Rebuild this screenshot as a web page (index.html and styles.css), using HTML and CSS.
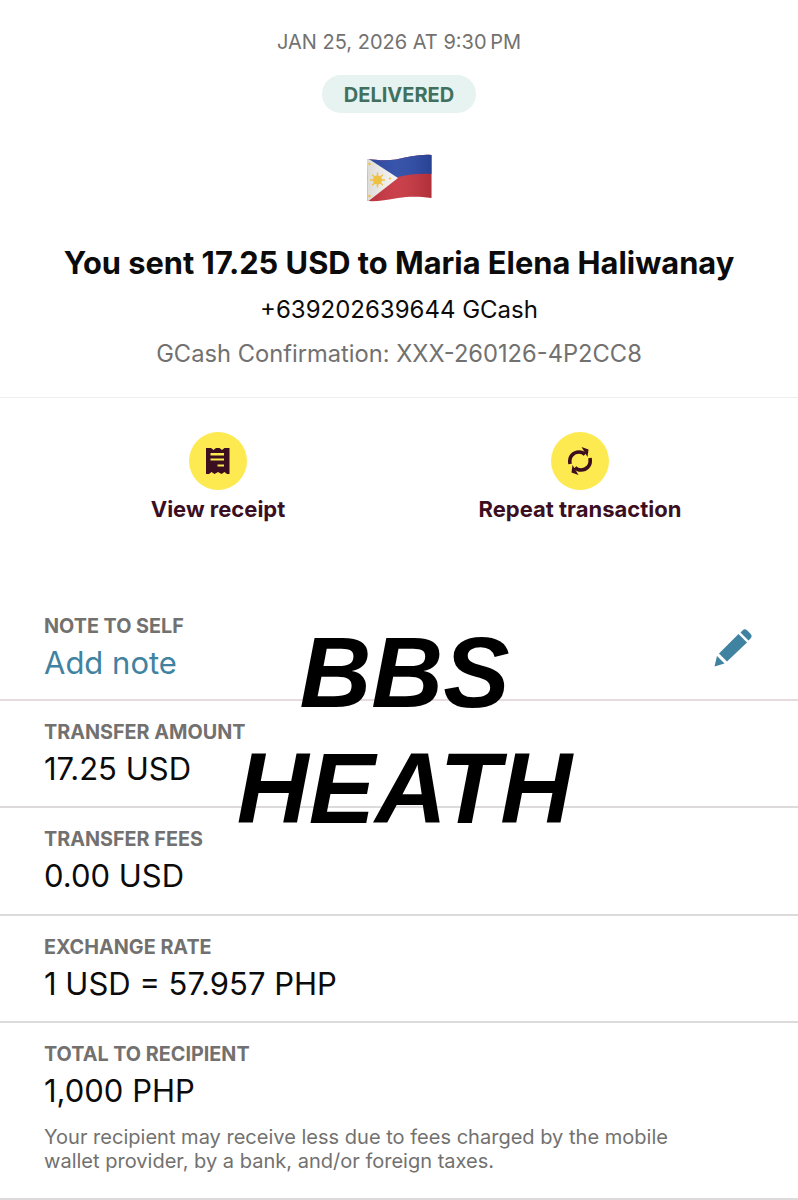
FILE: index.html
```html
<!DOCTYPE html>
<html lang="en">
<head>
    <meta charset="UTF-8">
    <meta name="viewport" content="width=device-width, initial-scale=1.0">
    <title>Transfer details</title>
    <link rel="stylesheet" href="styles.css">
</head>
<body>
    <div class="page">
        <section class="summary">
            <div class="date">JAN 25, 2026 AT 9:30&#8239;PM</div>
            <div class="status">DELIVERED</div>
            <svg class="flag" width="66" height="48" viewBox="0 0 66 48">
                <defs>
                    <clipPath id="flag-shape">
                        <path d="M1 5C10 6 20 7 30 5.500C42 3 54 0 65.500 1L65.500 44C54 42.500 44 42 32 44C20 46.500 10 47.500 1.500 47Z"/>
                    </clipPath>
                    <linearGradient id="flag-shade" x1="0" y1="0" x2="1" y2="0">
                        <stop offset="0" stop-color="#000" stop-opacity="0.1"/>
                        <stop offset="0.45" stop-color="#fff" stop-opacity="0.06"/>
                        <stop offset="1" stop-color="#000" stop-opacity="0.12"/>
                    </linearGradient>
                </defs>
                <g clip-path="url(#flag-shape)">
                    <rect width="66" height="48" fill="#c73540"/>
                    <path d="M0 0H66V20C54 19.500 44 20 32 23C20 25 10 26 0 26Z" fill="#2c4aa6"/>
                    <path d="M0 3L32 24L0 49Z" fill="#f4f2ee"/>
                    <rect width="66" height="48" fill="url(#flag-shade)"/>
                </g>
                <g fill="#eec143">
                    <circle cx="11.500" cy="26" r="4.500"/>
                    <g stroke="#eec143" stroke-width="1.400">
                        <path d="M11.500 18.500V33.500M4 26H19M6.200 20.700L16.800 31.300M16.800 20.700L6.200 31.300"/>
                    </g>
                    <circle cx="3.500" cy="10" r="1.300"/>
                    <circle cx="3.500" cy="42" r="1.300"/>
                    <circle cx="24" cy="24.500" r="1.100"/>
                </g>
            </svg>
            <h1 class="title">You sent 17.25 USD to Maria Elena Haliwanay</h1>
            <div class="recipient">+639202639644 GCash</div>
            <div class="confirmation">GCash Confirmation: XXX-260126-4P2CC8</div>
        </section>

        <section class="actions">
            <div class="action">
                <div class="action-icon">
                    <svg width="24" height="28" viewBox="0 0 24 28">
                        <path fill="#3b0f1f" fill-rule="evenodd" d="M0 1H5L7.500 3L10 1H13.500L16 3L18.500 1H23.500V27H21L18.500 25L15.500 27L12 25L8.500 27L5.500 25L3 27H0ZM4.500 6V8.500H18V6ZM4.500 11.500V13.500H18V11.500ZM11.500 17.500V19.500H18V17.500Z"/>
                    </svg>
                </div>
                <div class="action-label">View receipt</div>
            </div>
            <div class="action">
                <div class="action-icon">
                    <svg width="26" height="30" viewBox="0 0 26 30" fill="none" stroke="#3b0f1f" stroke-width="3.600">
                        <path d="M3 18C1.500 10 7 6 12 6C14.500 6 16.500 6.800 18 8.500"/>
                        <path d="M23 12C24.500 20 19 24 14 24C11.500 24 9.500 23.200 8 21.500"/>
                        <path d="M14.500 1L21.500 3.500L20.500 11Z" fill="#3b0f1f" stroke="none"/>
                        <path d="M11.500 29L4.500 26.500L5.500 19Z" fill="#3b0f1f" stroke="none"/>
                    </svg>
                </div>
                <div class="action-label">Repeat transaction</div>
            </div>
        </section>

        <section class="details">
            <div class="row row-note">
                <div>
                    <div class="row-label">NOTE TO SELF</div>
                    <div class="row-value add-note">Add note</div>
                </div>
                <svg class="edit" width="38" height="38" viewBox="0 0 38 38">
                    <path fill="#3f83a0" d="M0.500 37.500L3 27L10.500 34.500Z"/>
                    <path fill="#3f83a0" d="M5 24.500L24.500 5L33 13.500L13 32.500Z"/>
                    <path fill="#3f83a0" d="M26.500 3.500L28.500 1.500C30 0 31.500 0 33 1.300L36.500 4.800C38 6.300 38 8 36.500 9.500L34.500 11.500Z"/>
                </svg>
            </div>
            <div class="row">
                <div class="row-label">TRANSFER AMOUNT</div>
                <div class="row-value">17.25 USD</div>
            </div>
            <div class="row">
                <div class="row-label">TRANSFER FEES</div>
                <div class="row-value">0.00 USD</div>
            </div>
            <div class="row">
                <div class="row-label">EXCHANGE RATE</div>
                <div class="row-value">1 USD = 57.957 PHP</div>
            </div>
            <div class="row row-last">
                <div class="row-label">TOTAL TO RECIPIENT</div>
                <div class="row-value">1,000 PHP</div>
                <p class="row-note-text">Your recipient may receive less due to fees charged by the mobile wallet provider, by a bank, and/or foreign taxes.</p>
            </div>
        </section>

        <div class="stamp">BBS<br>HEATH</div>
    </div>
</body>
</html>
```
FILE: styles.css
```css
body {
    margin: 0;
    background-color: #fff;
    font-family: "Inter", "Liberation Sans", sans-serif;
    color: #0c0b0b;
    overflow: hidden;
}
.page {
    position: relative;
    width: 798px;
    height: 1200px;
    overflow: hidden;
}
.summary {
    display: flex;
    flex-direction: column;
    align-items: center;
    height: 398px;
    padding-top: 31px;
    box-sizing: border-box;
    border-bottom: 1px solid #efeded;
}
.date {
    font-size: 20px;
    line-height: 22px;
    color: #72716f;
}
.status {
    margin-top: 22px;
    width: 154px;
    height: 38px;
    border-radius: 19px;
    background-color: #e7f3f1;
    color: #41705f;
    font-size: 20px;
    font-weight: 700;
    line-height: 40px;
    text-align: center;
}
.flag {
    margin-top: 41px;
}
.title {
    margin: 43px 0 0;
    font-size: 30.800px;
    line-height: 36px;
    font-weight: 700;
}
.recipient {
    margin-top: 15px;
    font-size: 24px;
    line-height: 28px;
}
.confirmation {
    margin-top: 16px;
    font-size: 23.700px;
    line-height: 28px;
    color: #72716f;
}
.actions {
    display: flex;
    height: 202px;
    padding-top: 34px;
    box-sizing: border-box;
}
.action {
    display: flex;
    flex-direction: column;
    align-items: center;
}
.action:first-child {
    width: 436px;
}
.action:last-child {
    width: 288px;
}
.action-icon {
    display: flex;
    align-items: center;
    justify-content: center;
    width: 58px;
    height: 58px;
    border-radius: 50%;
    background-color: #fde950;
}
.action-label {
    margin-top: 6px;
    font-size: 22px;
    line-height: 26px;
    font-weight: 700;
    color: #3b0f1f;
}
.row {
    height: 107.250px;
    padding: 19px 44px 0;
    box-sizing: border-box;
    border-bottom: 2px solid #dcdada;
}
.row-note {
    display: flex;
    justify-content: space-between;
    height: 101px;
    padding-top: 14px;
    padding-right: 46px;
    border-bottom-color: #e6dcdd;
}
.row-note .edit {
    margin-top: 15px;
}
.row-label {
    font-size: 19.800px;
    line-height: 24px;
    font-weight: 700;
    color: #72716f;
}
.row-value {
    margin-top: 7px;
    font-size: 31px;
    line-height: 36px;
}
.add-note {
    color: #3f83a0;
}
.row-last {
    height: 177px;
}
.row-note-text {
    margin: 16px 0 0;
    width: 680px;
    font-size: 20.050px;
    line-height: 24px;
    color: #72716f;
}
.stamp {
    position: absolute;
    top: 615px;
    left: 0;
    width: 809px;
    font-family: "Liberation Sans", sans-serif;
    font-size: 99.500px;
    line-height: 116px;
    font-weight: 700;
    font-style: italic;
    color: #000;
    text-align: center;
}
```
